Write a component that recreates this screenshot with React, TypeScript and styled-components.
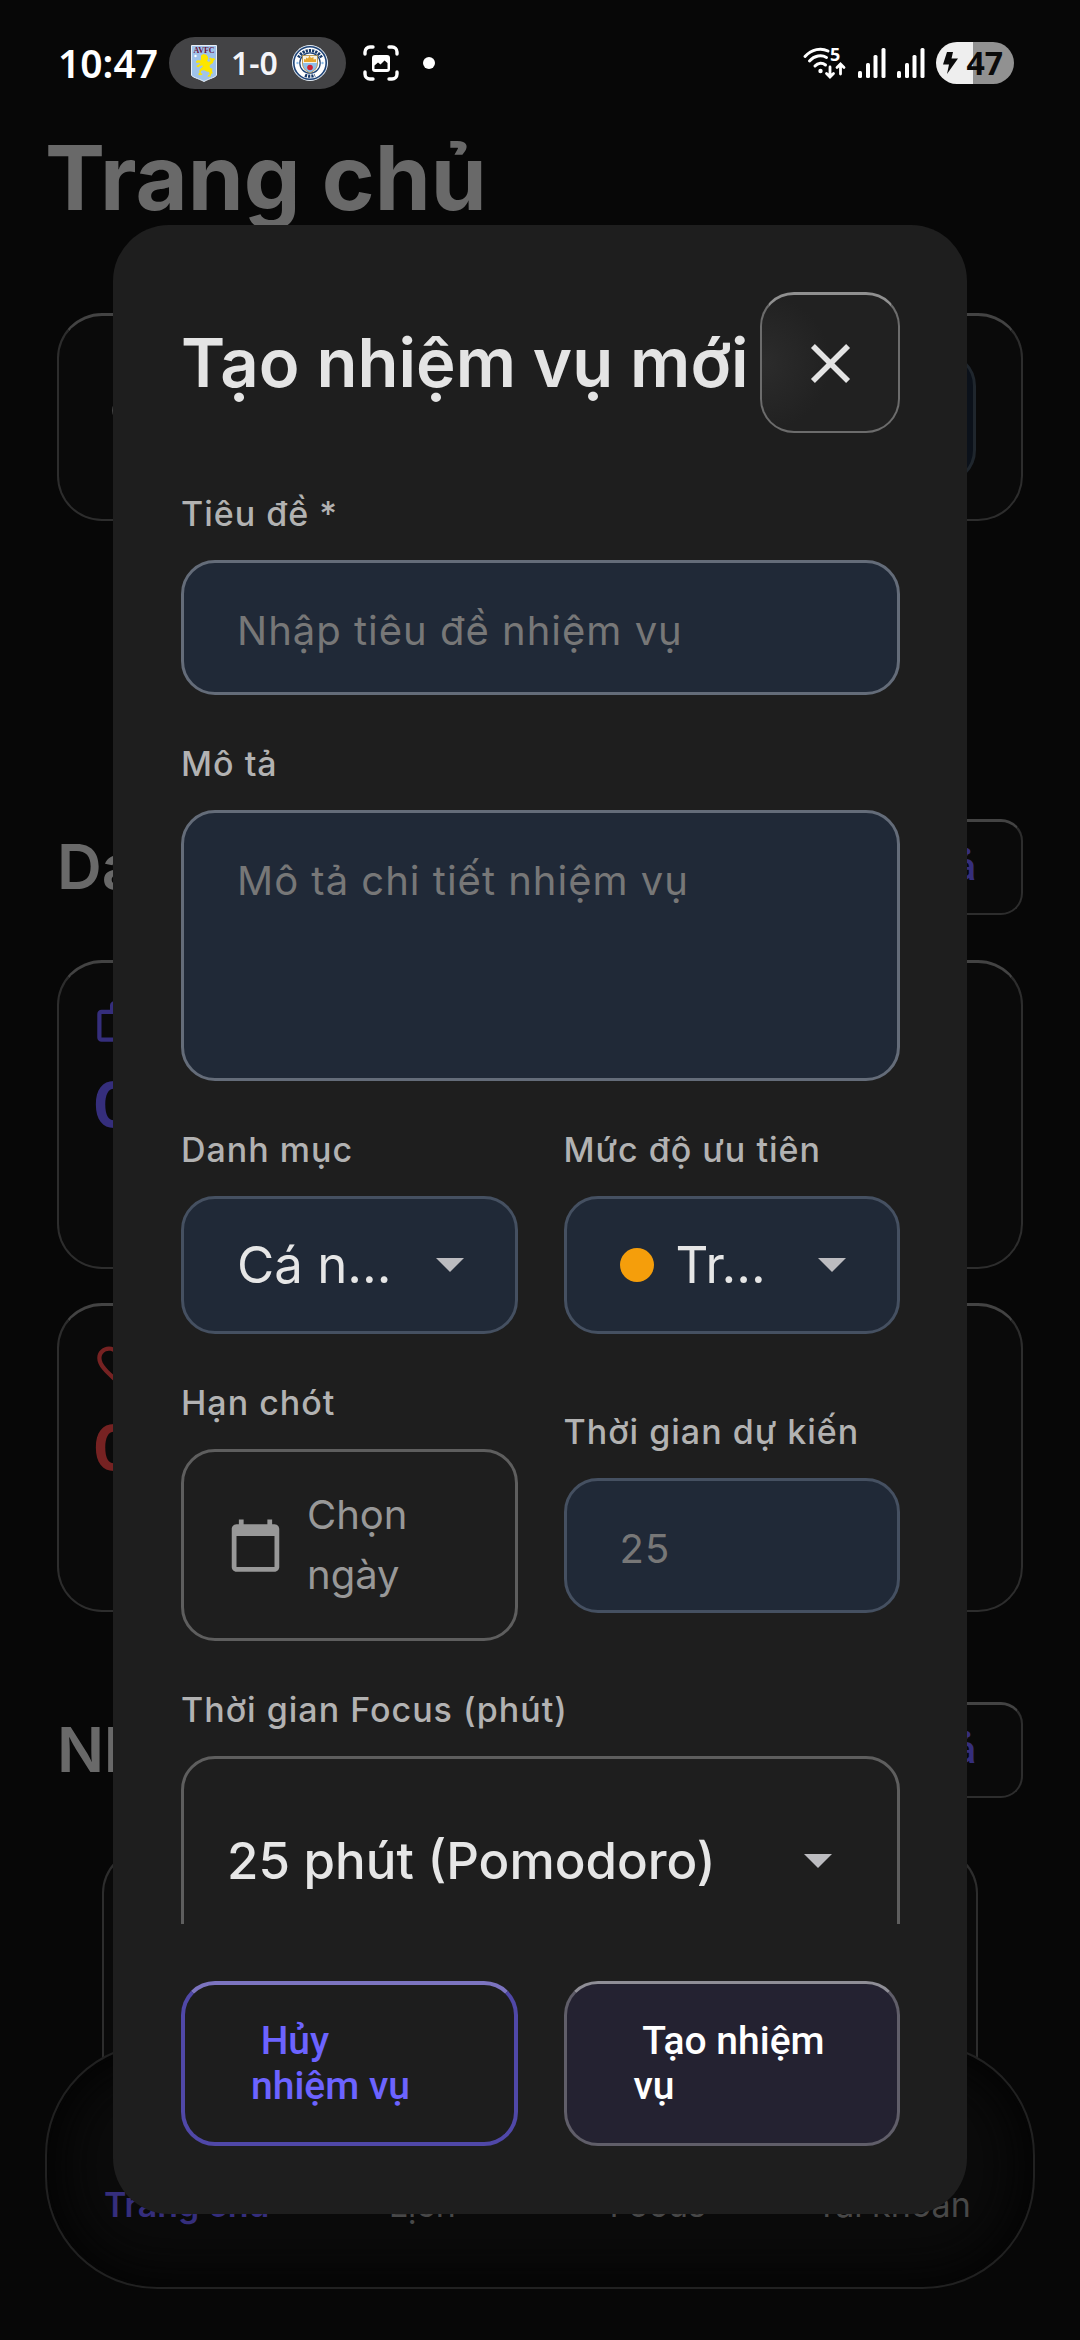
import React from "react";
import styled, { createGlobalStyle, css } from "styled-components";

const GlobalStyle = createGlobalStyle`
  *, *::before, *::after { box-sizing: border-box; }
  html, body { margin: 0; background: #070707; }
  body {
    font-family: Inter, Roboto, "Noto Sans", sans-serif;
    color: #e4e4e4;
  }
  button, input, textarea, select { font: inherit; color: inherit; margin: 0; }
  h1, h2, p { margin: 0; }
`;

/* ---------- shell ---------- */

const Screen = styled.div`
  position: relative;
  height: 100vh;
  overflow: hidden;
  background: #070707;
`;

const StatusBar = styled.header`
  position: relative;
  z-index: 3;
  display: flex;
  align-items: center;
  justify-content: space-between;
  height: 124px;
  padding: 2px 66px 0 58px;
`;

const StatusGroup = styled.div<{ $gap: number }>`
  display: flex;
  align-items: center;
  gap: ${(p) => p.$gap}px;
`;

const Clock = styled.time`
  font: 600 39px/52px "Noto Sans", Roboto, sans-serif;
  color: #fff;
`;

const ScorePill = styled.div`
  display: flex;
  align-items: center;
  justify-content: space-between;
  width: 177px;
  height: 52px;
  margin-right: 6px;
  padding: 0 18px 0 22px;
  border-radius: 26px;
  background: #434345;
  color: #f4f4f8;
  font: 600 32px/52px "Noto Sans", Roboto, sans-serif;
`;

const Dot = styled.span`
  width: 12px;
  height: 12px;
  margin-left: 13px;
  border-radius: 50%;
  background: #fff;
`;

const Battery = styled.div`
  display: flex;
  align-items: center;
  justify-content: space-between;
  width: 78px;
  height: 42px;
  padding: 0 11px 0 7px;
  border-radius: 21px;
  background: linear-gradient(90deg, #eeeeee 47%, #919191 47%);
  color: #0a0a0a;
  font: 700 32px/42px "Noto Sans", Roboto, sans-serif;
`;

const StatusGlyph = styled.svg`
  overflow: visible;
`;

/* ---------- dimmed page ---------- */

const Page = styled.main`
  padding: 0 57px;
`;

const PageTitle = styled.h1`
  margin-left: -12px;
  font-size: 90px;
  line-height: 108px;
  font-weight: 700;
  color: #696969;
`;

const glass = css`
  border: 2px solid #2d2d2d;
  border-top: 3px solid #434343;
  background: #0a0a0a;
`;

const SearchCard = styled.div`
  ${glass}
  display: flex;
  align-items: center;
  justify-content: space-between;
  gap: 34px;
  height: 208px;
  margin-top: 81px;
  padding: 0 45px;
  border-radius: 45px;
  color: #696969;
`;

const SearchBox = styled.input`
  flex: 1;
  min-width: 0;
  height: 132px;
  padding: 0 45px;
  border: 3px solid #1f262d;
  border-radius: 34px;
  background: #0b111a;
`;

const SectionHead = styled.div<{ $top: number }>`
  display: flex;
  align-items: center;
  justify-content: space-between;
  margin-top: ${(p) => p.$top}px;
`;

const SectionTitle = styled.h2`
  font-size: 62px;
  line-height: 74px;
  font-weight: 600;
  color: #696969;
`;

const SeeAll = styled.button`
  ${glass}
  height: 96px;
  padding: 0 45px;
  border-radius: 22px;
  color: #352e7c;
  font: 500 39px/45px Roboto, sans-serif;
`;

const StatList = styled.div`
  display: grid;
  gap: 34px;
  margin-top: 45px;
`;

const StatCard = styled.section<{ $tone: string }>`
  ${glass}
  display: flex;
  flex-direction: column;
  align-items: flex-start;
  gap: 20px;
  height: 309px;
  padding: 34px;
  border-radius: 45px;
  color: ${(p) => p.$tone};
`;

const StatValue = styled.p`
  font-size: 62px;
  line-height: 74px;
  font-weight: 700;
`;

const TaskCard = styled.section`
  ${glass}
  height: 300px;
  margin: 50px 45px 0;
  border-radius: 45px;
`;

const NavBar = styled.nav`
  position: absolute;
  left: 45px;
  right: 45px;
  bottom: 51px;
  z-index: 1;
  display: grid;
  grid-template-columns: repeat(4, 1fr);
  align-items: end;
  height: 246px;
  padding: 0 22px 58px;
  border: 2px solid #212121;
  border-radius: 112px;
  background: #0b0b0b;
  box-shadow: inset 0 0 50px 16px #040404;
`;

const NavLink = styled.a<{ $active?: boolean }>`
  text-align: center;
  text-decoration: none;
  white-space: nowrap;
  font-size: 34px;
  line-height: 48px;
  font-weight: ${(p) => (p.$active ? 600 : 400)};
  color: ${(p) => (p.$active ? "#352e7c" : "#484848")};
`;

/* ---------- dialog ---------- */

const Overlay = styled.div`
  position: absolute;
  inset: 0;
  z-index: 2;
  display: flex;
  padding: 225px 113px 126px;
`;

const Dialog = styled.form`
  flex: 1;
  min-width: 0;
  display: flex;
  flex-direction: column;
  gap: 57px;
  padding: 67px 67px 68px 68px;
  border-radius: 56px;
  background: #1e1e1e;
`;

const DialogHead = styled.div`
  display: flex;
  align-items: center;
  justify-content: space-between;
`;

const DialogTitle = styled.h2`
  font-size: 67px;
  line-height: 82px;
  font-weight: 600;
  white-space: nowrap;
`;

const CloseButton = styled.button`
  display: grid;
  place-items: center;
  flex: none;
  width: 140px;
  height: 141px;
  padding: 0;
  border: 2px solid #6c6c6c;
  border-top: 3px solid #909090;
  border-radius: 34px;
  background: radial-gradient(circle at 0 50%, #2c2c2c, #212121 45%);
`;

const Fields = styled.div`
  flex: 1;
  min-height: 0;
  overflow: hidden;
  display: flex;
  flex-direction: column;
  gap: 45px;
`;

const FieldRow = styled.div`
  display: grid;
  grid-template-columns: 1fr 1fr;
  align-items: center;
  gap: 46px;
`;

const Field = styled.div`
  display: flex;
  flex-direction: column;
  gap: 22px;
  min-width: 0;
`;

const Label = styled.label`
  font-size: 34px;
  line-height: 48px;
  font-weight: 500;
  letter-spacing: 1px;
  white-space: nowrap;
  color: #b2b2b2;
`;

const box = css`
  width: 100%;
  border-radius: 34px;
  border: 3px solid #646c79;
  background: #202937;
  outline: none;
`;

const placeholder = css`
  letter-spacing: 1px;
  &::placeholder {
    color: #777777;
    opacity: 1;
  }
`;

const TextInput = styled.input<{ $muted?: boolean }>`
  ${box}
  ${placeholder}
  height: 135px;
  padding: 6px 53px 0;
  font-size: 40px;
  line-height: 60px;
  ${(p) => p.$muted && "border-color: #455061;"}
`;

const TextArea = styled.textarea`
  ${box}
  ${placeholder}
  display: block;
  height: 271px;
  padding: 38px 53px;
  font-size: 40px;
  line-height: 60px;
  resize: none;
`;

const SelectBox = styled.div<{ $plain?: boolean }>`
  ${box}
  display: flex;
  align-items: center;
  gap: 22px;
  height: ${(p) => (p.$plain ? 210 : 138)}px;
  flex: none;
  padding: ${(p) => (p.$plain ? "0 65px 0 43px" : "0 51px 0 53px")};
  border-color: ${(p) => (p.$plain ? "#5e5e5e" : "#455061")};
  background: ${(p) => (p.$plain ? "transparent" : "#202937")};
  font-weight: ${(p) => (p.$plain ? 500 : 400)};
`;

const Select = styled.select`
  flex: 1;
  min-width: 0;
  padding: 0;
  border: 0;
  outline: none;
  appearance: none;
  background: transparent;
  font-size: 51px;
  line-height: 62px;
  color: #e6e6e6;
`;

const PriorityDot = styled.span`
  flex: none;
  width: 34px;
  height: 34px;
  border-radius: 50%;
  background: #f59e0b;
`;

const DateButton = styled.button`
  ${box}
  display: flex;
  align-items: center;
  gap: 23px;
  height: 192px;
  padding: 0 43px;
  border-color: #5e5e5e;
  background: transparent;
  font-size: 40px;
  line-height: 60px;
  text-align: left;
  color: #989898;
`;

const Actions = styled.div`
  display: grid;
  grid-template-columns: 1fr 1fr;
  gap: 46px;
`;

const ActionButton = styled.button<{ $primary?: boolean }>`
  height: 165px;
  padding: 0 ${(p) => (p.$primary ? 67 : 66)}px;
  border: ${(p) => (p.$primary ? "3px solid #605e69" : "4px solid #5048a8")};
  border-top-color: ${(p) => (p.$primary ? "#8f8e96" : "#7c74c0")};
  border-radius: 34px;
  background: ${(p) => (p.$primary ? "#242231" : "#1d1d1d")};
  color: ${(p) => (p.$primary ? "#ffffff" : "#6c63ff")};
  font: 500 39px/45px Roboto, sans-serif;
  text-align: left;
  white-space: pre;
`;

/* ---------- icons ---------- */

const Caret = () => (
  <svg width="28" height="14" viewBox="0 0 28 14" aria-hidden="true">
    <path d="M0 0h28L14 14z" fill="#bcbcc0" />
  </svg>
);

const CloseIcon = () => (
  <svg width="67" height="67" viewBox="0 0 24 24" fill="#e4e4e4" aria-hidden="true">
    <path d="M19 6.41 17.59 5 12 10.59 6.41 5 5 6.41 10.59 12 5 17.59 6.41 19 12 13.41 17.59 19 19 17.59 13.41 12z" />
  </svg>
);

const SearchIcon = () => (
  <svg width="67" height="67" viewBox="0 0 24 24" fill="currentColor" aria-hidden="true">
    <path d="M15.5 14h-.79l-.28-.27A6.471 6.471 0 0 0 16 9.5 6.5 6.5 0 1 0 9.5 16c1.61 0 3.09-.59 4.23-1.57l.27.28v.79l5 4.99L20.49 19l-4.99-5zm-6 0C7.01 14 5 11.99 5 9.5S7.01 5 9.5 5 14 7.01 14 9.5 11.99 14 9.5 14z" />
  </svg>
);

const CalendarIcon = () => (
  <svg width="57" height="57" viewBox="0 0 24 24" fill="#989898" aria-hidden="true">
    <path d="M20 3h-1V1h-2v2H7V1H5v2H4c-1.1 0-2 .9-2 2v16c0 1.1.9 2 2 2h16c1.1 0 2-.9 2-2V5c0-1.1-.9-2-2-2zm0 18H4V8h16v13z" />
  </svg>
);

const WorkIcon = () => (
  <svg width="51" height="51" viewBox="0 0 24 24" fill="currentColor" aria-hidden="true">
    <path d="M14 6V4h-4v2h4zM4 8v11h16V8H4zm16-2c1.11 0 2 .89 2 2v11c0 1.11-.89 2-2 2H4c-1.11 0-2-.89-2-2l.01-11c0-1.11.88-2 1.99-2h4V4c0-1.11.89-2 2-2h4c1.11 0 2 .89 2 2v2h4z" />
  </svg>
);

const HeartIcon = () => (
  <svg width="51" height="51" viewBox="0 0 24 24" fill="currentColor" aria-hidden="true">
    <path d="M16.5 3c-1.74 0-3.41.81-4.5 2.09C10.91 3.81 9.24 3 7.5 3 4.42 3 2 5.42 2 8.5c0 3.78 3.4 6.86 8.55 11.54L12 21.35l1.45-1.32C18.6 15.36 22 12.28 22 8.5 22 5.42 19.58 3 16.5 3zm-4.4 15.55l-.1.1-.1-.1C7.14 14.24 4 11.39 4 8.5 4 6.5 5.5 5 7.5 5c1.54 0 3.04.99 3.57 2.36h1.87C13.46 5.99 14.96 5 16.5 5c2 0 3.5 1.5 3.5 3.5 0 2.89-3.14 5.74-7.9 10.05z" />
  </svg>
);

const VillaCrest = () => (
  <StatusGlyph width="26" height="37" viewBox="0 0 26 37" aria-hidden="true">
    <path d="M.5.5h25v29.5c0 2-7 3.5-12.5 6.5C7.5 33.5.5 32 .5 30z" fill="#9fc3ea" stroke="#e8eef6" />
    <text x="13" y="8" textAnchor="middle" fontFamily="Liberation Serif, serif" fontWeight="700" fontSize="8" fill="#6b1640">AVFC</text>
    <circle cx="4.5" cy="11" r="1.2" fill="#fff" />
    <path d="M10 10.5l2.5-1.5 3 .8 1.5 2.2.2 2-1.2 1.5 1.5 1.5 2-1-.3-1.5-1.2-1 1.5-1 1.5 1 2-.5 1.2 1.5-1.5 1-.8 2.5-2.4 1.5-1 1.5.8 2 2.2.8-.5 2 .8 2.5-1.5.5-.8 2.7-3 .3.5-1.5 1.5-.8-.3-2.5-2.5-.5-2.5-1.2-2.5.2-1.2 1.5.8 1.5 1.2.3-.5 1.3-3.2.2-.5-1.5 1.3-1-.3-2 1.5-2.5 2-1.5-.5-1.5-2 .7-2 1.3-1.5-.3-.2-1.5 1.5-.6 2.5-1.6-1.5-.7-2.5.3-.7-1.5 1.5-1.2 2.8.4.7-.8z" fill="#fde600" />
  </StatusGlyph>
);

const CityCrest = () => (
  <svg width="36" height="36" viewBox="0 0 36 36" aria-hidden="true">
    <circle cx="18" cy="18" r="17.5" fill="#fff" stroke="#dfe8f2" />
    <circle cx="18" cy="18" r="16.2" fill="none" stroke="#1d4377" strokeWidth="1.6" />
    <path d="M6.5 12.5A13 13 0 0 1 29.5 12.5" fill="none" stroke="#173a6b" strokeWidth="3.2" strokeDasharray="2.2 1" />
    <path d="M13 30.2a13 13 0 0 0 10 0" fill="none" stroke="#173a6b" strokeWidth="3.2" strokeDasharray="2.2 1" />
    <circle cx="5.5" cy="18" r="1.2" fill="#8fc0ea" />
    <circle cx="30.5" cy="18" r="1.2" fill="#8fc0ea" />
    <circle cx="18" cy="18" r="10.2" fill="#fff" stroke="#1d4377" strokeWidth="1.2" />
    <path d="M10.5 10.5h15v7.5c0 5-3 8-7.5 10-4.5-2-7.5-5-7.5-10z" fill="#8fc0ea" stroke="#b58a35" strokeWidth=".8" />
    <path d="M11 11h14v7H11z" fill="#f6f2e4" />
    <path d="M12 17v-3l2 .5v-2l2 1 1.5-3L19 13l2.5-1v2.5l2.5-.5v3z" fill="#e6a52c" />
    <circle cx="18" cy="22.5" r="2.8" fill="#cf2233" />
  </svg>
);

const CaptureIcon = () => (
  <svg width="36" height="36" viewBox="0 0 36 36" fill="none" aria-hidden="true">
    <path d="M2 9V7a5 5 0 0 1 5-5h3M26 2h3a5 5 0 0 1 5 5v2M34 27v2a5 5 0 0 1-5 5h-3M10 34H7a5 5 0 0 1-5-5v-2" stroke="#fff" strokeWidth="3.4" strokeLinecap="round" />
    <rect x="9" y="10" width="18" height="17" rx="3" fill="#fff" />
    <path d="M11.5 24v-3.5l3.5-3 2.5 2 4-4 3 2.5v6z" fill="#0a0a0a" />
  </svg>
);

const WifiIcon = () => (
  <StatusGlyph width="44" height="32" viewBox="0 0 44 32" fill="none" stroke="#fff" strokeLinecap="round" aria-hidden="true">
    <path d="M2 9.5C9 2 18 .5 25 4M6.5 14c5-5.5 12-6.5 17-3.5M12 19c3-3.5 7.5-3.5 10.5-1" strokeWidth="3" />
    <circle cx="17.5" cy="24" r="2.2" fill="#fff" stroke="none" />
    <path d="M27 20v9M23.5 26.5 27 30l3.5-3.5M37.5 27v-9M34 20.5l3.5-3.5 3.5 3.5" strokeWidth="2.8" />
    <text x="27" y="14" fontFamily="Noto Sans, sans-serif" fontWeight="700" fontSize="18" fill="#fff" stroke="none">5</text>
  </StatusGlyph>
);

const SignalIcon = () => (
  <svg width="28" height="30" viewBox="0 0 28 30" fill="#fff" aria-hidden="true">
    <rect x="0" y="23" width="4" height="7" rx="1.5" />
    <rect x="8" y="15" width="4" height="15" rx="1.5" />
    <rect x="15.5" y="7" width="4" height="23" rx="1.5" />
    <rect x="23.5" y="0" width="4" height="30" rx="1.5" />
  </svg>
);

const BoltIcon = () => (
  <svg width="16" height="22" viewBox="0 0 16 22" fill="#0a0a0a" aria-hidden="true">
    <path d="M4 0h6l-1.5 6.5H15L4 22l2-9.5H0z" />
  </svg>
);

const TABS = ["Trang chủ", "Lịch", "Focus", "Tài khoản"];

export default function App() {
  return (
    <Screen>
      <GlobalStyle />
      <StatusBar>
        <StatusGroup $gap={11}>
          <Clock>10:47</Clock>
          <ScorePill>
            <VillaCrest />
            <span>1-0</span>
            <CityCrest />
          </ScorePill>
          <CaptureIcon />
          <Dot />
        </StatusGroup>
        <StatusGroup $gap={11}>
          <WifiIcon />
          <SignalIcon />
          <SignalIcon />
          <Battery>
            <BoltIcon />
            <span>47</span>
          </Battery>
        </StatusGroup>
      </StatusBar>

      <Page>
        <PageTitle>Trang chủ</PageTitle>
        <SearchCard>
          <SearchIcon />
          <SearchBox type="search" aria-label="Tìm kiếm" />
        </SearchCard>

        <SectionHead $top={298}>
          <SectionTitle>Danh mục</SectionTitle>
          <SeeAll type="button">Tất cả</SeeAll>
        </SectionHead>
        <StatList>
          <StatCard $tone="#352e7c">
            <WorkIcon />
            <StatValue>0</StatValue>
          </StatCard>
          <StatCard $tone="#762222">
            <HeartIcon />
            <StatValue>0</StatValue>
          </StatCard>
        </StatList>

        <SectionHead $top={90}>
          <SectionTitle>Nhiệm vụ</SectionTitle>
          <SeeAll type="button">Tất cả</SeeAll>
        </SectionHead>
        <TaskCard />
      </Page>

      <NavBar>
        {TABS.map((tab, i) => (
          <NavLink key={tab} href="#" $active={i === 0}>
            {tab}
          </NavLink>
        ))}
      </NavBar>

      <Overlay>
        <Dialog role="dialog" aria-labelledby="dialog-title">
          <DialogHead>
            <DialogTitle id="dialog-title">Tạo nhiệm vụ mới</DialogTitle>
            <CloseButton type="button" aria-label="Đóng">
              <CloseIcon />
            </CloseButton>
          </DialogHead>

          <Fields>
            <Field>
              <Label htmlFor="title">Tiêu đề *</Label>
              <TextInput id="title" placeholder="Nhập tiêu đề nhiệm vụ" />
            </Field>
            <Field>
              <Label htmlFor="description">Mô tả</Label>
              <TextArea id="description" placeholder="Mô tả chi tiết nhiệm vụ" />
            </Field>
            <FieldRow>
              <Field>
                <Label htmlFor="category">Danh mục</Label>
                <SelectBox>
                  <Select id="category">
                    <option>Cá n...</option>
                  </Select>
                  <Caret />
                </SelectBox>
              </Field>
              <Field>
                <Label htmlFor="priority">Mức độ ưu tiên</Label>
                <SelectBox>
                  <PriorityDot />
                  <Select id="priority">
                    <option>Tr...</option>
                  </Select>
                  <Caret />
                </SelectBox>
              </Field>
            </FieldRow>
            <FieldRow>
              <Field>
                <Label htmlFor="deadline">Hạn chót</Label>
                <DateButton id="deadline" type="button">
                  <CalendarIcon />
                  <span>
                    Chọn
                    <br />
                    ngày
                  </span>
                </DateButton>
              </Field>
              <Field>
                <Label htmlFor="estimate">Thời gian dự kiến</Label>
                <TextInput id="estimate" inputMode="numeric" placeholder="25" $muted />
              </Field>
            </FieldRow>
            <Field>
              <Label htmlFor="focus">Thời gian Focus (phút)</Label>
              <SelectBox $plain>
                <Select id="focus">
                  <option>25 phút (Pomodoro)</option>
                </Select>
                <Caret />
              </SelectBox>
            </Field>
          </Fields>

          <Actions>
            <ActionButton type="button">{" Hủy\nnhiệm vụ"}</ActionButton>
            <ActionButton type="submit" $primary>
              {" Tạo nhiệm\nvụ"}
            </ActionButton>
          </Actions>
        </Dialog>
      </Overlay>
    </Screen>
  );
}
